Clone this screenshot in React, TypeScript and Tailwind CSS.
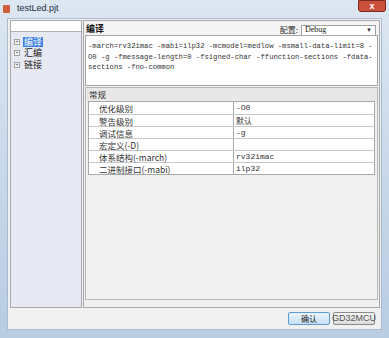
const rows: [string, string][] = [
  ['优化级别', '-O0'],
  ['警告级别', '默认'],
  ['调试信息', '-g'],
  ['宏定义(-D)', ''],
  ['体系结构(-march)', 'rv32imac'],
  ['二进制接口(-mabi)', 'ilp32'],
];

const cjk = { fontFamily: '"Noto Sans CJK SC", "Liberation Sans", sans-serif' };
const mono = { fontFamily: '"Liberation Mono", "Noto Sans CJK SC", monospace' };

function TreeItem({ label, selected }: { label: string; selected?: boolean }) {
  return (
    <div className="flex items-center h-[11.5px] pl-[3px] gap-[3px]">
      <span className="w-[6px] h-[6px] border border-[#a0a0a0] bg-white flex items-center justify-center text-[6px] leading-none text-[#555]">
        +
      </span>
      <span
        className={
          selected
            ? 'bg-[#3b7fe0] text-white px-[1px] text-[9px] leading-[10px]'
            : 'text-[#222] px-[1px] text-[9px] leading-[10px]'
        }
        style={cjk}
      >
        {label}
      </span>
    </div>
  );
}

export default function App() {
  return (
    <div className="w-[389px] h-[338px] flex flex-col bg-gradient-to-b from-[#dde7f2] via-[#c9d8ea] to-[#b9cce2] overflow-hidden">
      {/* title bar */}
      <div className="h-[18px] flex justify-between pl-[3px] pr-[3px]">
        <div className="flex items-center">
          <div className="w-[7px] h-[8px] rounded-[1px] bg-[#d0603a] mr-[7px]" />
          <span className="text-[9px] text-[#1e2a3a]" style={{ fontFamily: '"Liberation Sans", sans-serif' }}>
            testLed.pjt
          </span>
        </div>
        <div
          className="w-[28px] h-[12px] rounded-b-[3px] bg-[#c9503a] border border-[#7a2a20] flex items-center justify-center text-white text-[9px] font-bold leading-none"
          style={{ fontFamily: '"Liberation Sans", sans-serif' }}
        >
          x
        </div>
      </div>

      {/* client */}
      <div className="flex-1 mx-[7px] bg-[#f0f0f0] border border-[#a9bbd0] flex flex-col">
        <div className="flex gap-[1px] pl-[2px] pt-[1px] pr-[1px] h-[289px]">
          {/* left panel */}
          <div className="w-[72px] flex flex-col border border-[#a8a8b0]">
            <div className="h-[11px] bg-white border-b border-[#b0b0b8]" />
            <div className="flex-1 bg-[#e6e8f2] pt-[4px]">
              <TreeItem label="编译" selected />
              <TreeItem label="汇编" />
              <TreeItem label="链接" />
            </div>
          </div>

          {/* right panel */}
          <div className="flex-1 flex flex-col border border-[#a8a8a8] p-[1px]">
            <div className="h-[13px] flex items-center justify-between pl-[1px] pr-[2px] bg-[#f4f4f4]">
              <span className="text-[9px] font-bold text-[#111]" style={cjk}>
                编译
              </span>
              <div className="flex items-center gap-[3px] mt-[3px]">
                <span className="text-[8px] text-[#333]" style={cjk}>
                  配置:
                </span>
                <div className="w-[75px] h-[11px] bg-white border border-[#a0a0a0] flex items-center justify-between pl-[3px] pr-[3px]">
                  <span className="text-[8px] leading-none text-[#222]" style={{ fontFamily: '"Liberation Serif", serif' }}>
                    Debug
                  </span>
                  <span className="text-[6px] leading-none text-[#333]">▼</span>
                </div>
              </div>
            </div>
            <div
              className="h-[51px] bg-white border border-[#a8a8a8] pl-[2px] pt-[5px] pr-[2px] text-[7.2px] leading-[10.5px] text-[#333] break-all"
              style={mono}
            >
              -march=rv32imac -mabi=ilp32 -mcmodel=medlow -msmall-data-limit=8 -
              <br />
              O0 -g -fmessage-length=0 -fsigned-char -ffunction-sections -fdata-
              <br />
              sections -fno-common
            </div>
            <div className="flex-1 flex flex-col border border-[#b8b8b8] mt-[1px] mb-[6px] bg-[#f0f0f0]">
              <div className="h-[13px] pl-[3px] flex items-center bg-[#e8e8e8] text-[8.5px] text-[#333]" style={cjk}>
                常规
              </div>
              <div className="mx-[2px] border border-[#a8a8a8] bg-white">
                {rows.map(([k, v], i) => (
                  <div key={k} className={`flex h-[12px] ${i > 0 ? 'border-t border-[#c8c8c8]' : ''}`}>
                    <div className="w-[145px] pl-[10px] border-r border-[#a8a8a8] text-[8.5px] leading-[12px] text-[#333] whitespace-nowrap" style={cjk}>
                      {k}
                    </div>
                    <div className="flex-1 pl-[2px] text-[8px] leading-[12px] text-[#333]" style={v === '默认' ? cjk : mono}>
                      {v}
                    </div>
                  </div>
                ))}
              </div>
            </div>
          </div>
        </div>

        {/* buttons */}
        <div className="flex justify-end gap-[3px] pr-[6px] mt-[4px]">
          <div className="w-[42px] h-[13px] border border-[#5c9bd6] bg-gradient-to-b from-[#eaf4fc] to-[#c8e2f6] rounded-[2px] flex items-center justify-center text-[8px] text-[#222]" style={cjk}>
            确认
          </div>
          <div className="w-[42px] h-[13px] border border-[#8a8a8a] bg-gradient-to-b from-[#f6f6f6] to-[#dcdcdc] rounded-[2px] flex items-center justify-center text-[9px] text-[#555]" style={{ fontFamily: '"Liberation Sans", sans-serif' }}>
            GD32MCU
          </div>
        </div>
      </div>
      <div className="h-[8px]" />
    </div>
  );
}
